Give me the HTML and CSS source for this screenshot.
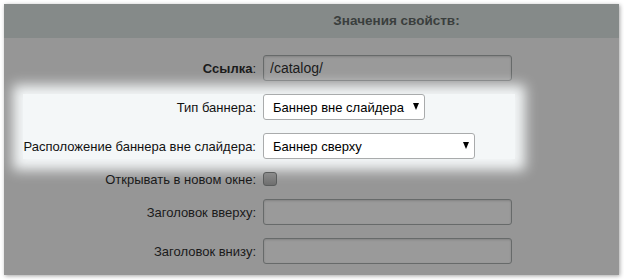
FILE: index.html
```html
<!DOCTYPE html>
<html lang="ru">
<head>
  <meta charset="UTF-8" />
  <title>Значения свойств</title>
  <link rel="stylesheet" href="styles.css">
</head>
<body>
  <div class="frame">
    <div class="head">Значения свойств:</div>
    <div class="rows">
      <div class="row">
        <label class="lbl" for="link"><b>Ссылка</b>:</label>
        <input class="field dim" type="text" id="link" value="/catalog/" />
      </div>

      <div class="hl">
        <div class="row">
          <label class="lbl" for="type">Тип баннера:</label>
          <span class="sel sel-short">
            <select id="type"><option>Баннер вне слайдера</option></select>
          </span>
        </div>
        <div class="row">
          <label class="lbl" for="place">Расположение баннера вне слайдера:</label>
          <span class="sel sel-long">
            <select id="place"><option>Баннер сверху</option></select>
          </span>
        </div>
      </div>

      <div class="row row-check">
        <label class="lbl" for="blank">Открывать в новом окне:</label>
        <input class="check" type="checkbox" id="blank" />
      </div>
      <div class="row">
        <label class="lbl" for="top">Заголовок вверху:</label>
        <input class="field dim" type="text" id="top" />
      </div>
      <div class="row">
        <label class="lbl" for="bottom">Заголовок внизу:</label>
        <input class="field dim" type="text" id="bottom" />
      </div>
    </div>
  </div>
</body>
</html>
```

FILE: styles.css
```css
body {
  margin: 0;
  padding: 4px 5px 5px 4px;
  background: #fff;
  font-family: "Liberation Sans", Arial, sans-serif;
  font-size: 13px;
  color: #1a1a1a;
}
.frame {
  width: 615px;
  height: 271px;
  background: #969696;
  box-shadow: 1px 1px 4px rgba(0,0,0,0.35);
  overflow: hidden;
}
.head {
  height: 34px;
  line-height: 34px;
  background: #858a89;
  color: #3a3e3d;
  font-weight: 700;
  font-size: 13.5px;
  text-align: center;
  padding-left: 170px;
}
.rows {
  padding-top: 17px;
  display: flex;
  flex-direction: column;
  gap: 13px;
}
.row {
  display: flex;
  align-items: center;
  height: 26px;
}
.row-check {
  height: 14px;
}
.lbl {
  width: var(--lw, 259px);
  flex: none;
  text-align: right;
  padding-right: 7px;
  box-sizing: border-box;
  white-space: nowrap;
}
.lbl b {
  font-weight: 700;
}
.field {
  width: 249px;
  height: 26px;
  box-sizing: border-box;
  margin: 0;
  padding: 0 6px;
  font-family: inherit;
  font-size: 14px;
  border-radius: 3px;
}
.dim {
  background: #9a9a9a;
  border: 1px solid #676a6a;
  color: #1a1a1a;
  box-shadow: inset 0 1px 2px rgba(0,0,0,0.15);
}
.hl {
  --lw: 240px;
  margin: 0 104px 0 19px;
  display: flex;
  flex-direction: column;
  gap: 13px;
  background: #f4f7f8;
  box-shadow: 0 1px 12px 10px #f4f7f8;
  color: #111;
}
.sel {
  position: relative;
  display: block;
}
.sel select {
  appearance: none;
  -webkit-appearance: none;
  height: 26px;
  box-sizing: border-box;
  margin: 0;
  padding: 0 8px 0 9px;
  background: #fff;
  border: 1px solid #a9abac;
  border-radius: 3px;
  font-family: inherit;
  font-size: 13px;
  color: #000;
}
.sel-short select {
  width: 162px;
}
.sel-long select {
  width: 212px;
}
.sel::after {
  content: "";
  position: absolute;
  right: 6px;
  top: 9px;
  border-left: 3px solid transparent;
  border-right: 3px solid transparent;
  border-top: 7px solid #000;
  pointer-events: none;
}
.check {
  appearance: none;
  -webkit-appearance: none;
  width: 14px;
  height: 14px;
  margin: 0;
  border: 1px solid #5a5c5c;
  border-radius: 3px;
  background: linear-gradient(#8c8c8c, #6e6e6e);
}
```
